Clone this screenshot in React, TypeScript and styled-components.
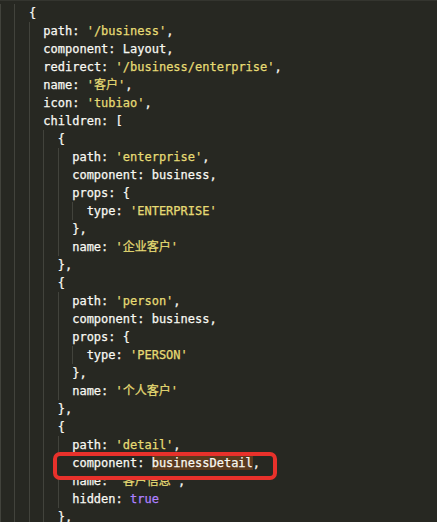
import React from 'react'
import styled, { createGlobalStyle } from 'styled-components'

const GlobalStyle = createGlobalStyle`
  html, body {
    margin: 0;
    padding: 0;
    background: #272822;
  }
`

type Tok = { t: string, k?: 'key' | 'str' | 'kw' | 'sel' }
type CodeLine = { level: number, toks: Tok[], marked?: boolean }

const Editor = styled.div`
  width: 437px;
  height: 522px;
  overflow: hidden;
  background: #272822;
  padding-top: 4px;
  box-sizing: border-box;
  border-top: 1px solid #34352f;
  font-family: "DejaVu Sans Mono", "Noto Sans CJK SC", monospace;
  font-size: 12px;
  color: #f8f8f2;
`

const Row = styled.div`
  position: relative;
  display: flex;
  height: 18px;
  line-height: 18px;
  white-space: pre;
  margin-top: ${(p: { first?: boolean }) => (p.first ? '-1px' : '0')};
`

const Guide = styled.span`
  display: inline-block;
  width: 14.44px;
  height: 18px;
  flex: none;
  box-shadow: inset 1px 0 0 #42433c;
`

const Text = styled.span`
  position: relative;
  z-index: 2;
  -webkit-text-stroke: 0.25px currentColor;
`

const Str = styled.span`
  color: #e6db74;
`

const Kw = styled.span`
  color: #ae81ff;
`

const Sel = styled.span`
  background: #5b3a1e;
`

const Mark = styled.div`
  position: absolute;
  z-index: 1;
  left: 53px;
  top: -2px;
  width: 224px;
  height: 28px;
  box-sizing: border-box;
  border: 4px solid #e8312b;
  border-radius: 7px;
  background: #272822;
  pointer-events: none;
`

const L = (level: number, ...toks: Tok[]): CodeLine => ({ level, toks })
const k = (t: string): Tok => ({ t, k: 'key' })
const s = (t: string): Tok => ({ t, k: 'str' })
const p = (t: string): Tok => ({ t })

const LINES: CodeLine[] = [
  L(2, p('{')),
  L(3, k('path: '), s("'/business'"), p(',')),
  L(3, k('component: '), p('Layout,')),
  L(3, k('redirect: '), s("'/business/enterprise'"), p(',')),
  L(3, k('name: '), s("'客户'"), p(',')),
  L(3, k('icon: '), s("'tubiao'"), p(',')),
  L(3, k('children: '), p('[')),
  L(4, p('{')),
  L(5, k('path: '), s("'enterprise'"), p(',')),
  L(5, k('component: '), p('business,')),
  L(5, k('props: '), p('{')),
  L(6, k('type: '), s("'ENTERPRISE'")),
  L(5, p('},')),
  L(5, k('name: '), s("'企业客户'")),
  L(4, p('},')),
  L(4, p('{')),
  L(5, k('path: '), s("'person'"), p(',')),
  L(5, k('component: '), p('business,')),
  L(5, k('props: '), p('{')),
  L(6, k('type: '), s("'PERSON'")),
  L(5, p('},')),
  L(5, k('name: '), s("'个人客户'")),
  L(4, p('},')),
  L(4, p('{')),
  L(5, k('path: '), s("'detail'"), p(',')),
  { level: 5, toks: [k('component: '), { t: 'businessDetail', k: 'sel' }, p(',')], marked: true },
  L(5, k('name: '), s("'客户信息'"), p(',')),
  L(5, k('hidden: '), { t: 'true', k: 'kw' }),
  L(4, p('},')),
]

const Token = ({ tok }: { tok: Tok }) => {
  if (tok.k === 'str') return <Str>{tok.t}</Str>
  if (tok.k === 'kw') return <Kw>{tok.t}</Kw>
  if (tok.k === 'sel') return <Sel>{tok.t}</Sel>
  return <>{tok.t}</>
}

export default function App() {
  return (
    <>
      <GlobalStyle />
      <Editor>
        {LINES.map((line, i) => (
          <Row key={i} first={i === 0}>
            {Array.from({ length: line.level }).map((_, g) => <Guide key={g} />)}
            {line.marked && <Mark />}
            <Text style={line.marked ? { zIndex: 3 } : { zIndex: 0 }}>
              {line.toks.map((tok, j) => <Token key={j} tok={tok} />)}
            </Text>
          </Row>
        ))}
      </Editor>
    </>
  )
}
